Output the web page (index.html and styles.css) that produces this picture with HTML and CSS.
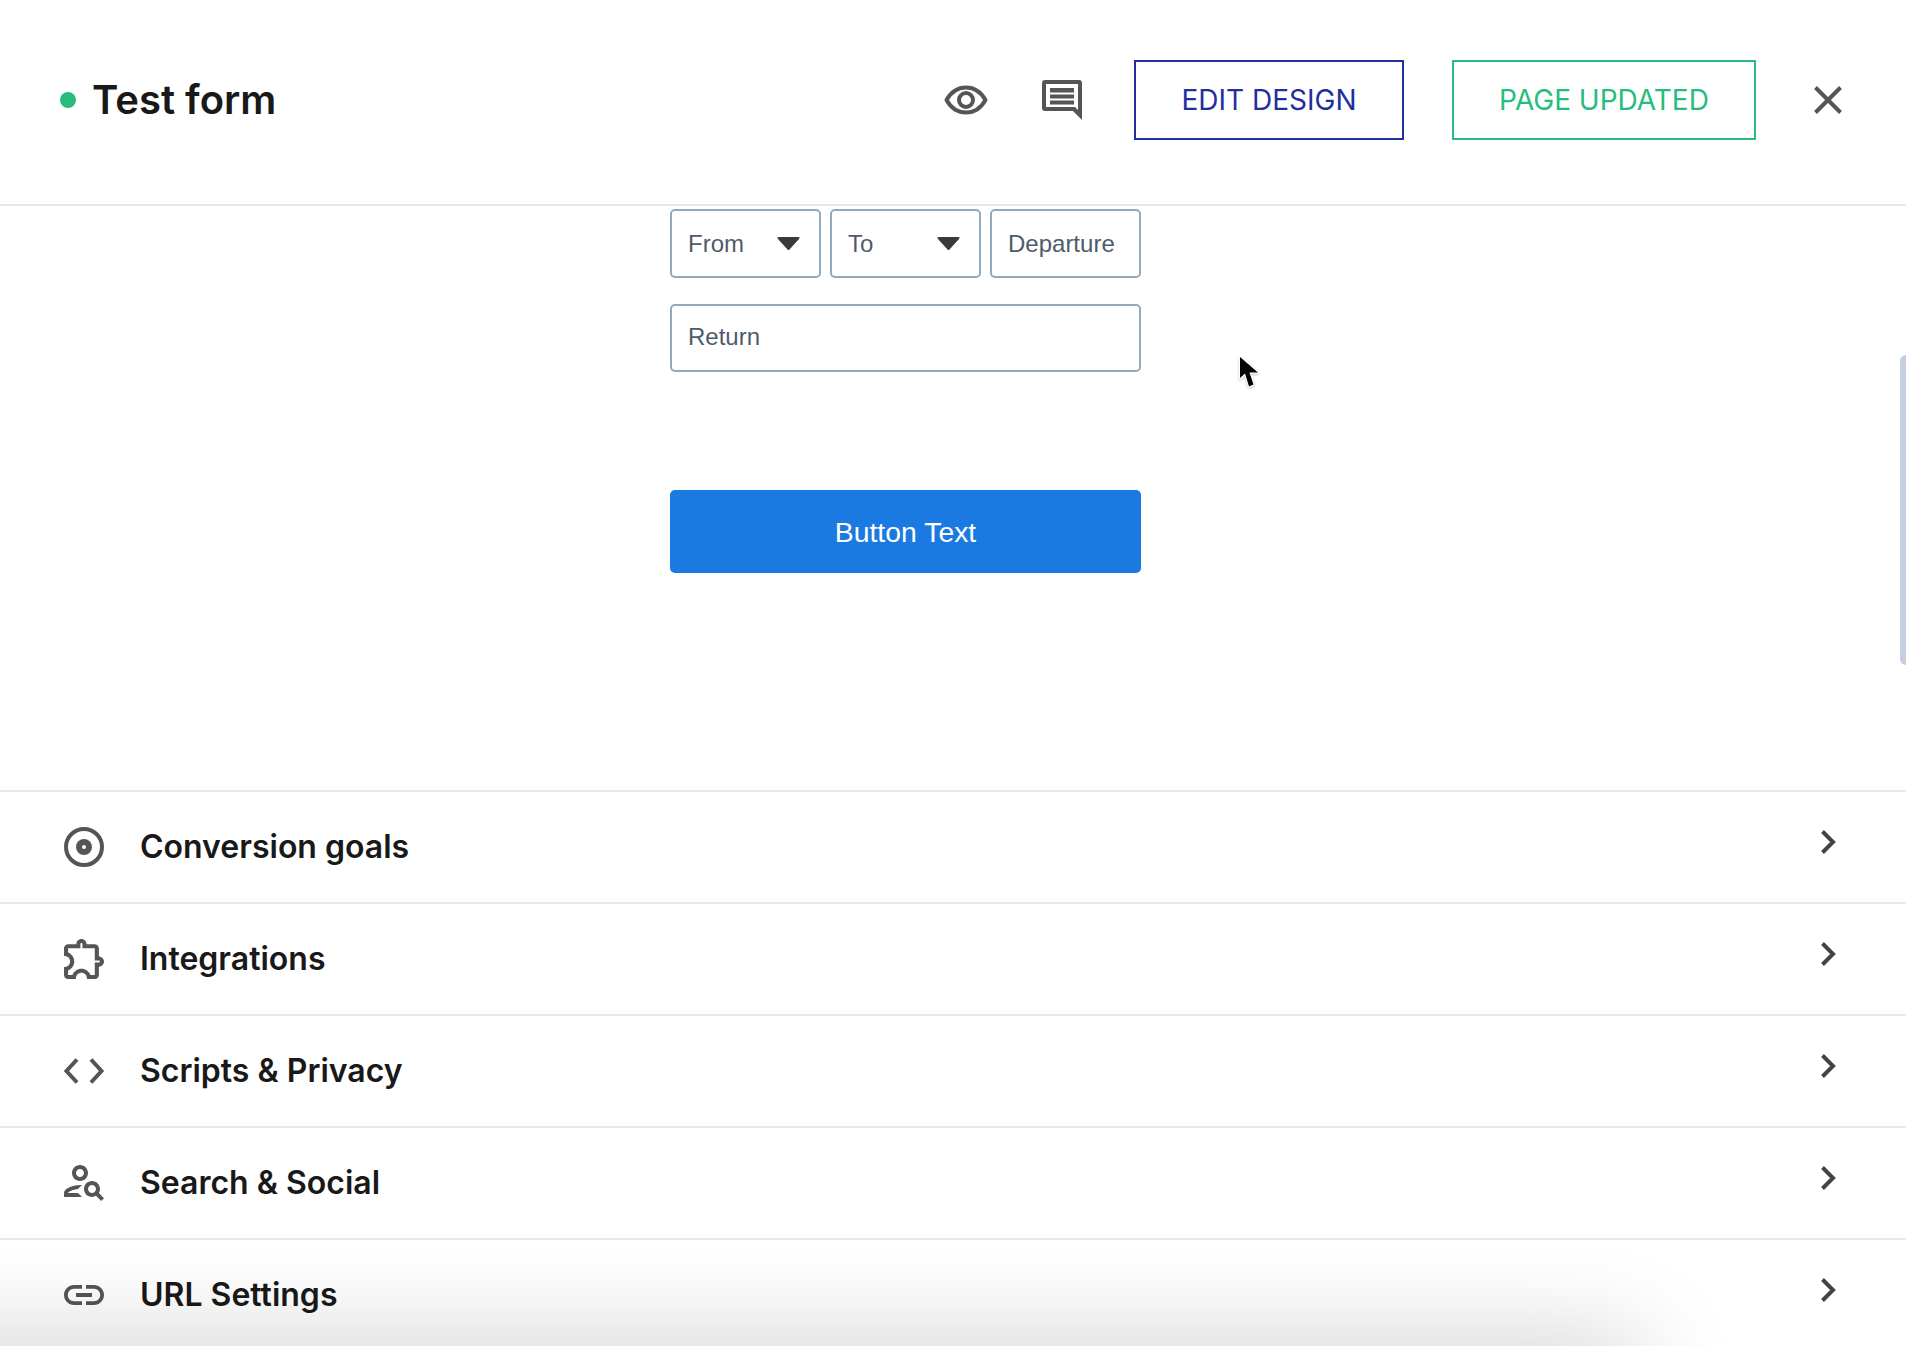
FILE: index.html
```html
<!DOCTYPE html>
<html lang="en">
<head>
<meta charset="utf-8">
<title>Test form</title>
<link rel="stylesheet" href="styles.css">
</head>
<body>
<div class="page">
  <header class="topbar">
    <div class="title-wrap"><span class="dot"></span><h1 class="title">Test form</h1></div>
    <div class="actions">
      <svg class="icon-eye" viewBox="0 0 44 30"><path d="M2.500 15C7 7 14 2.500 22 2.500S37 7 41.500 15C37 23 30 27.500 22 27.500S7 23 2.500 15Z" fill="none" stroke="#555" stroke-width="4" stroke-linejoin="round"/><circle cx="22" cy="15" r="7" fill="none" stroke="#555" stroke-width="4"/></svg>
      <svg class="icon-comment" viewBox="0 0 40 40"><path fill="#555" fill-rule="evenodd" d="M3 0H37a3 3 0 0 1 3 3V40L31 31H3a3 3 0 0 1-3-3V3a3 3 0 0 1 3-3ZM4 4V27H33L36 30V4Z"/><path fill="#555" d="M8 8H32V12.500H8ZM8 14.500H32V18.500H8ZM8 20.500H32V24.500H8Z"/></svg>
      <a class="btn btn-edit">EDIT DESIGN</a>
      <a class="btn btn-updated">PAGE UPDATED</a>
      <svg class="icon-close" viewBox="0 0 28 28"><path d="M1.500 1.500L26.500 26.500M26.500 1.500L1.500 26.500" stroke="#555" stroke-width="4" fill="none"/></svg>
    </div>
  </header>

  <main class="preview">
    <form class="form">
      <div class="field-row">
        <div class="field">From<svg class="caret" viewBox="0 0 23 13"><path d="M1.500 1H21.500L11.500 12Z" fill="#3a3a3a" stroke="#3a3a3a" stroke-width="2" stroke-linejoin="round"/></svg></div>
        <div class="field">To<svg class="caret" viewBox="0 0 23 13"><path d="M1.500 1H21.500L11.500 12Z" fill="#3a3a3a" stroke="#3a3a3a" stroke-width="2" stroke-linejoin="round"/></svg></div>
        <div class="field">Departure</div>
      </div>
      <div class="field field-wide">Return</div>
      <div class="submit">Button Text</div>
    </form>
  </main>

  <section class="list">
    <div class="row">
      <svg class="row-icon" viewBox="0 0 40 40"><circle cx="20" cy="20" r="18" fill="none" stroke="#555" stroke-width="4"/><circle cx="20" cy="20" r="8" fill="#555"/><circle cx="20" cy="20" r="2" fill="#fff"/></svg>
      <span class="row-label">Conversion goals</span>
      <svg class="chevron" viewBox="0 0 15 24"><path d="M1.500 1.500L12 12L1.500 22.500" fill="none" stroke="#444" stroke-width="4"/></svg>
    </div>
    <div class="row">
      <svg class="row-icon" viewBox="2 2.500 19.500 19.500"><path fill="#555" d="M10.500 4.500c.28 0 .5.22.5.5v2h6v6h2c.28 0 .5.22.5.5s-.22.5-.5.5h-2v6h-2.120c-.68-1.750-2.390-3-4.380-3s-3.700 1.250-4.380 3H4v-2.120c1.750-.68 3-2.390 3-4.380 0-1.990-1.240-3.700-2.990-4.380L4 7h6V5c0-.28.22-.5.500-.5m0-2C9.120 2.500 8 3.620 8 5H4c-1.100 0-1.990.9-1.990 2v3.800h.29c1.490 0 2.700 1.210 2.700 2.700s-1.210 2.700-2.700 2.700H2V20c0 1.100.9 2 2 2h3.800v-.3c0-1.490 1.210-2.700 2.700-2.700s2.700 1.210 2.700 2.700v.3H17c1.100 0 2-.9 2-2v-4c1.380 0 2.500-1.120 2.500-2.500S20.380 11 19 11V7c0-1.100-.9-2-2-2h-4c0-1.380-1.120-2.500-2.500-2.500z"/></svg>
      <span class="row-label">Integrations</span>
      <svg class="chevron" viewBox="0 0 15 24"><path d="M1.500 1.500L12 12L1.500 22.500" fill="none" stroke="#444" stroke-width="4"/></svg>
    </div>
    <div class="row">
      <svg class="row-icon" viewBox="0 0 40 40"><path d="M13 8.500L2.500 20L13 31.500M27 8.500L37.500 20L27 31.500" fill="none" stroke="#555" stroke-width="4"/></svg>
      <span class="row-label">Scripts &amp; Privacy</span>
      <svg class="chevron" viewBox="0 0 15 24"><path d="M1.500 1.500L12 12L1.500 22.500" fill="none" stroke="#444" stroke-width="4"/></svg>
    </div>
    <div class="row">
      <svg class="row-icon-search" viewBox="2 4 20 18"><path fill="#555" d="M10 12c2.210 0 4-1.790 4-4s-1.790-4-4-4-4 1.790-4 4 1.790 4 4 4zm0-6c1.100 0 2 .9 2 2s-.9 2-2 2-2-.9-2-2 .9-2 2-2zM4 18c.2-.63 2.570-1.680 4.960-1.940l2.040-2c-.39-.04-.68-.06-1-.06-2.670 0-8 1.340-8 4v2h9l-2-2H4zM19.430 18.020c.35-.59.57-1.280.57-2.020 0-2.210-1.790-4-4-4s-4 1.790-4 4 1.790 4 4 4c.74 0 1.430-.22 2.020-.57L20.590 22 22 20.590l-2.570-2.570zM16 18c-1.100 0-2-.9-2-2s.9-2 2-2 2 .9 2 2-.9 2-2 2z"/></svg>
      <span class="row-label">Search &amp; Social</span>
      <svg class="chevron" viewBox="0 0 15 24"><path d="M1.500 1.500L12 12L1.500 22.500" fill="none" stroke="#444" stroke-width="4"/></svg>
    </div>
    <div class="row">
      <svg class="row-icon-link" viewBox="2 7 20 10"><path fill="#555" d="M3.900 12c0-1.710 1.390-3.100 3.100-3.100h4V7H7c-2.760 0-5 2.240-5 5s2.240 5 5 5h4v-1.900H7c-1.710 0-3.100-1.390-3.100-3.100zM8 13h8v-2H8v2zm9-6h-4v1.900h4c1.710 0 3.100 1.390 3.100 3.100s-1.390 3.100-3.100 3.100h-4V17h4c2.760 0 5-2.240 5-5s-2.240-5-5-5z"/></svg>
      <span class="row-label">URL Settings</span>
      <svg class="chevron" viewBox="0 0 15 24"><path d="M1.500 1.500L12 12L1.500 22.500" fill="none" stroke="#444" stroke-width="4"/></svg>
    </div>
  </section>

  <svg class="cursor" viewBox="0 0 28 40"><path d="M4 4V25L9 20.500L13 33.500L17.500 31.500L13.500 19.500H22Z" fill="#000" stroke="#fff" stroke-width="2.500" stroke-linejoin="round" paint-order="stroke"/></svg>
  <div class="scroll-thumb"></div>
  <div class="bottom-shade"></div>
</div>
</body>
</html>
```

FILE: styles.css
```css
* { box-sizing: border-box; }
html, body { margin: 0; padding: 0; background: #fff; }
.page {
  position: relative;
  width: 1906px;
  height: 1346px;
  overflow: hidden;
  font-family: Inter, "Liberation Sans", sans-serif;
}
.topbar {
  height: 206px;
  border-bottom: 2px solid #e8e8e8;
  display: flex;
  align-items: center;
  justify-content: space-between;
  padding: 0 64px 4px 60px;
}
.title-wrap { display: flex; align-items: center; gap: 16px; }
.dot { width: 16px; height: 16px; border-radius: 50%; background: #26bd7e; }
.title { margin: 0; font-size: 40px; font-weight: 600; color: #191919; line-height: 48px; }
.actions { display: flex; align-items: center; }
.icon-eye { width: 44px; height: 30px; margin-right: 54px; }
.icon-comment { width: 40px; height: 40px; margin-right: 52px; }
.btn {
  height: 80px;
  display: flex;
  align-items: center;
  justify-content: center;
  border: 2px solid;
  font-size: 28px;
  font-weight: 400;
}
.btn-edit { width: 270px; color: #1f2f9e; border-color: #1f2f9e; margin-right: 48px; }
.btn-updated { width: 304px; color: #26bd7e; border-color: #26bd7e; margin-right: 58px; }
.icon-close { width: 28px; height: 28px; }

.preview { height: 584px; padding: 3px 0 0 670px; }
.form { width: 471px; display: flex; flex-direction: column; font-family: "Liberation Sans", Arial, sans-serif; }
.field-row { display: grid; grid-template-columns: repeat(3, 1fr); gap: 9px; margin-bottom: 27px; height: 68px; }
.field {
  height: 69px;
  border: 2px solid #92a9bb;
  border-radius: 5px;
  display: flex;
  align-items: center;
  justify-content: space-between;
  padding: 0 18px 0 16px;
  font-size: 24px;
  color: #4f5b6b;
  background: #fff;
}
.field-wide { height: 68px; padding-bottom: 2px; }
.caret { width: 23px; height: 13px; margin-right: 1px; }
.submit {
  height: 83px;
  margin-top: 118px;
  padding-top: 1px;
  background: #1a7ae2;
  border-radius: 5px;
  display: flex;
  align-items: center;
  justify-content: center;
  font-size: 28.400px;
  color: #fff;
}

.list { display: flex; flex-direction: column; }
.row {
  height: 112px;
  flex: none;
  border-top: 2px solid #e8e8e8;
  display: flex;
  align-items: center;
  padding: 0 70px 0 64px;
}
.row-icon { width: 40px; height: 40px; margin-right: 36px; flex: none; }
.row-icon-search { width: 40px; height: 36px; margin-right: 36px; flex: none; }
.row-icon-link { width: 40px; height: 20px; margin-right: 36px; flex: none; }
.row-label { font-size: 32px; font-weight: 600; color: #191919; flex: 1; padding-bottom: 2px; }
.chevron { width: 15px; height: 24px; margin-bottom: 10px; flex: none; }

.cursor { position: absolute; left: 1236px; top: 353px; width: 28px; height: 40px; filter: drop-shadow(0 1px 1px rgba(0, 0, 0, 0.25)); }
.scroll-thumb {
  position: absolute;
  left: 1900px;
  top: 355px;
  width: 6px;
  height: 310px;
  background: #c5cfe0;
  border-radius: 6px 0 0 6px;
}
.bottom-shade {
  position: absolute;
  left: -200px;
  top: 1346px;
  width: 1840px;
  height: 60px;
  box-shadow: 0 0 100px 0 rgba(0, 0, 0, 0.24);
}
```
